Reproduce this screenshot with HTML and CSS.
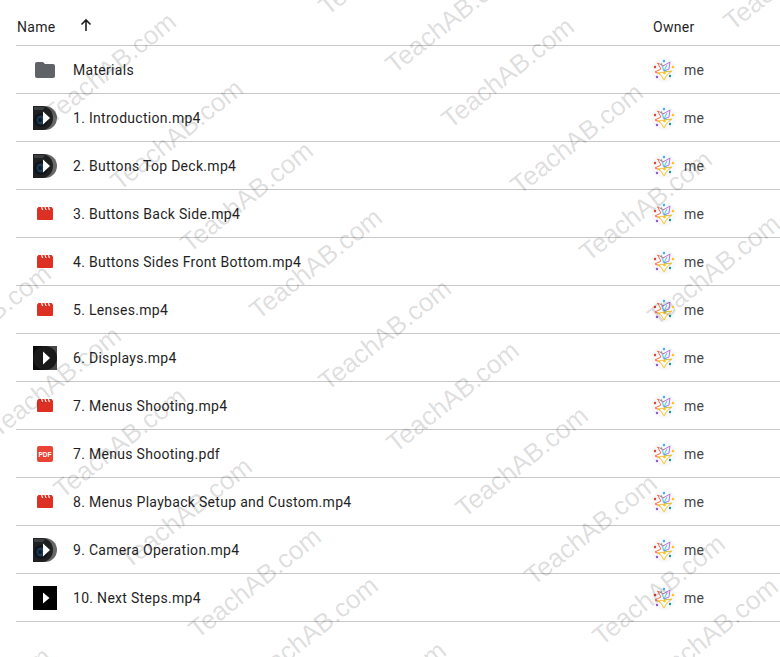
FILE: index.html
```html
<!DOCTYPE html>
<html lang="en">
<head>
  <meta charset="UTF-8" />
  <title>Materials</title>
  <link rel="stylesheet" href="styles.css">
</head>
<body>
  <svg class="defs" width="0" height="0">
    <symbol id="i-folder" viewBox="0 0 20 16">
      <path d="M2 0h6l2 2h8a2 2 0 0 1 2 2v10a2 2 0 0 1-2 2H2a2 2 0 0 1-2-2V2a2 2 0 0 1 2-2z" fill="#5f6368"/>
    </symbol>
    <symbol id="i-clip" viewBox="0 0 16 13">
      <path d="M0 1.500 1.500 0h13L16 1.500V12a1 1 0 0 1-1 1H1a1 1 0 0 1-1-1z" fill="#dd3025"/>
      <path d="M4 0l1 3h1.200L5.200 0zM7.400 0l1 3h1.200L8.600 0zM10.800 0l1 3H13L12 0z" fill="#fff"/>
    </symbol>
    <symbol id="i-pdf" viewBox="0 0 16 16">
      <rect width="16" height="16" rx="2" fill="#ea4335"/>
      <text x="8" y="10.500" text-anchor="middle" class="pdf-text">PDF</text>
    </symbol>
    <symbol id="i-cam" viewBox="0 0 24 24">
      <rect width="12" height="24" fill="#1e2022"/>
      <circle cx="12" cy="12" r="12" fill="#686868"/>
      <path d="M0 0h9a11 12 0 0 1 0 24H0z" fill="#1e2022"/>
      <path d="M1 1h11l-2 3H1z" fill="#3c3f42"/>
      <circle cx="8" cy="14" r="7" fill="#101418"/>
      <circle cx="8" cy="14" r="4.500" fill="#1c3a55"/>
      <circle cx="7" cy="14" r="2" fill="#0c1a28"/>
      <path d="M10 5.500v13l7-6.500z" fill="#fff"/>
    </symbol>
    <symbol id="i-dark" viewBox="0 0 24 24">
      <rect width="24" height="24" fill="#484848"/>
      <rect width="12" height="24" fill="#0a0a0a"/>
      <circle cx="12" cy="12" r="12" fill="#191919"/>
      <path d="M10 5.500v13l7-6.500z" fill="#fff"/>
    </symbol>
    <symbol id="i-black" viewBox="0 0 24 24">
      <rect width="24" height="24" fill="#000"/>
      <path d="M10 6.500v11l6.500-5.500z" fill="#fff"/>
    </symbol>
    <symbol id="i-me" viewBox="0 0 24 24">
      <circle cx="12" cy="12" r="12" fill="#f8f8fa"/>
      <g fill="none" stroke-width="0.900">
        <path d="M3 14l6-3-3.500-6L12 8M3 14l5 2" stroke="#f4623a"/>
        <path d="M11 8l7-4-1 7-5 2" stroke="#a868d0"/>
        <path d="M9 5l3 8 7 1M12 13l3-6" stroke="#35b5e8"/>
        <path d="M6 15l14-2-5 4-3 5-3-5z" stroke="#fbc21a"/>
      </g>
      <circle cx="12" cy="3" r="1.200" fill="#35b5e8"/>
      <circle cx="3" cy="9" r="1.200" fill="#e53935"/>
      <circle cx="21" cy="9" r="1.200" fill="#fbc21a"/>
      <circle cx="5" cy="19" r="1.200" fill="#9c4fd0"/>
      <circle cx="18" cy="18" r="1.200" fill="#14958a"/>
      <circle cx="12.500" cy="15" r="1.300" fill="#fbc21a"/>
    </symbol>
  </svg>

  <div class="list">
    <div class="head">
      <div class="name-col head-name">
        <span>Name</span>
        <svg class="sort" viewBox="0 0 16 16"><path d="M8 14V3M3.500 7.500 8 3l4.500 4.500" fill="none" stroke="#1f1f1f" stroke-width="1.600"/></svg>
      </div>
      <div class="owner-col">Owner</div>
    </div>

    <div class="row">
      <div class="name-col"><span class="icon"><svg class="ic-folder"><use href="#i-folder"/></svg></span>Materials</div>
      <div class="owner-col owner"><svg class="avatar"><use href="#i-me"/></svg>me</div>
    </div>
    <div class="row">
      <div class="name-col"><span class="icon"><svg class="ic-thumb"><use href="#i-cam"/></svg></span>1. Introduction.mp4</div>
      <div class="owner-col owner"><svg class="avatar"><use href="#i-me"/></svg>me</div>
    </div>
    <div class="row">
      <div class="name-col"><span class="icon"><svg class="ic-thumb"><use href="#i-cam"/></svg></span>2. Buttons Top Deck.mp4</div>
      <div class="owner-col owner"><svg class="avatar"><use href="#i-me"/></svg>me</div>
    </div>
    <div class="row">
      <div class="name-col"><span class="icon"><svg class="ic-clip"><use href="#i-clip"/></svg></span>3. Buttons Back Side.mp4</div>
      <div class="owner-col owner"><svg class="avatar"><use href="#i-me"/></svg>me</div>
    </div>
    <div class="row">
      <div class="name-col"><span class="icon"><svg class="ic-clip"><use href="#i-clip"/></svg></span>4. Buttons Sides Front Bottom.mp4</div>
      <div class="owner-col owner"><svg class="avatar"><use href="#i-me"/></svg>me</div>
    </div>
    <div class="row">
      <div class="name-col"><span class="icon"><svg class="ic-clip"><use href="#i-clip"/></svg></span>5. Lenses.mp4</div>
      <div class="owner-col owner"><svg class="avatar"><use href="#i-me"/></svg>me</div>
    </div>
    <div class="row">
      <div class="name-col"><span class="icon"><svg class="ic-thumb"><use href="#i-dark"/></svg></span>6. Displays.mp4</div>
      <div class="owner-col owner"><svg class="avatar"><use href="#i-me"/></svg>me</div>
    </div>
    <div class="row">
      <div class="name-col"><span class="icon"><svg class="ic-clip"><use href="#i-clip"/></svg></span>7. Menus Shooting.mp4</div>
      <div class="owner-col owner"><svg class="avatar"><use href="#i-me"/></svg>me</div>
    </div>
    <div class="row">
      <div class="name-col"><span class="icon"><svg class="ic-pdf"><use href="#i-pdf"/></svg></span>7. Menus Shooting.pdf</div>
      <div class="owner-col owner"><svg class="avatar"><use href="#i-me"/></svg>me</div>
    </div>
    <div class="row">
      <div class="name-col"><span class="icon"><svg class="ic-clip"><use href="#i-clip"/></svg></span>8. Menus Playback Setup and Custom.mp4</div>
      <div class="owner-col owner"><svg class="avatar"><use href="#i-me"/></svg>me</div>
    </div>
    <div class="row">
      <div class="name-col"><span class="icon"><svg class="ic-thumb"><use href="#i-cam"/></svg></span>9. Camera Operation.mp4</div>
      <div class="owner-col owner"><svg class="avatar"><use href="#i-me"/></svg>me</div>
    </div>
    <div class="row">
      <div class="name-col"><span class="icon"><svg class="ic-thumb"><use href="#i-black"/></svg></span>10. Next Steps.mp4</div>
      <div class="owner-col owner"><svg class="avatar"><use href="#i-me"/></svg>me</div>
    </div>
  </div>

  <div class="marks">
    <span class="mark m1">TeachAB.com</span>
    <span class="mark m2">TeachAB.com</span>
    <span class="mark m3">TeachAB.com</span>
    <span class="mark m4">TeachAB.com</span>
    <span class="mark m5">TeachAB.com</span>
    <span class="mark m6">TeachAB.com</span>
    <span class="mark m7">TeachAB.com</span>
    <span class="mark m8">TeachAB.com</span>
    <span class="mark m9">TeachAB.com</span>
    <span class="mark m10">TeachAB.com</span>
    <span class="mark m11">TeachAB.com</span>
    <span class="mark m12">TeachAB.com</span>
    <span class="mark m13">TeachAB.com</span>
    <span class="mark m14">TeachAB.com</span>
    <span class="mark m15">TeachAB.com</span>
    <span class="mark m16">TeachAB.com</span>
    <span class="mark m17">TeachAB.com</span>
    <span class="mark m18">TeachAB.com</span>
    <span class="mark m19">TeachAB.com</span>
    <span class="mark m20">TeachAB.com</span>
    <span class="mark m21">TeachAB.com</span>
    <span class="mark m22">TeachAB.com</span>
    <span class="mark m23">TeachAB.com</span>
    <span class="mark m24">TeachAB.com</span>
    <span class="mark m25">TeachAB.com</span>
  </div>
</body>
</html>
```

FILE: styles.css
```css
body {
  margin: 0;
  height: 657px;
  overflow: hidden;
  position: relative;
  background: #fff;
  color: #1f1f1f;
  font-family: Roboto, "Noto Sans", sans-serif;
  font-size: 14px;
  letter-spacing: 0.3px;
}

.defs {
  position: absolute;
}

.pdf-text {
  font-family: "Liberation Sans", sans-serif;
  font-size: 6.5px;
  font-weight: bold;
  letter-spacing: 0;
  fill: #fff;
}

.list {
  padding-left: 16px;
}

.head,
.row {
  display: flex;
  align-items: center;
  box-sizing: border-box;
  border-bottom: 1px solid #c7c7c7;
}

.head {
  height: 46px;
  padding-top: 8px;
}

.row {
  height: 48px;
}

.name-col {
  flex: 1;
  display: flex;
  align-items: center;
}

.head-name {
  padding-left: 1px;
}

.sort {
  width: 16px;
  height: 16px;
  margin-left: 22px;
  margin-top: -3px;
}

.owner-col {
  width: 127px;
}

.owner {
  display: flex;
  align-items: center;
  color: #444746;
}

.icon {
  width: 57px;
  flex: none;
  display: flex;
  justify-content: center;
}

.ic-folder {
  width: 20px;
  height: 16px;
}

.ic-thumb {
  width: 24px;
  height: 24px;
}

.ic-clip {
  width: 16px;
  height: 13px;
}

.ic-pdf {
  width: 16px;
  height: 16px;
}

.avatar {
  width: 24px;
  height: 24px;
  margin-left: -1px;
  margin-right: 8px;
}

.marks {
  position: absolute;
  inset: 0;
  overflow: hidden;
  pointer-events: none;
}

.mark {
  position: absolute;
  transform: translate(-50%, -50%) rotate(-38.5deg);
  font-family: "Liberation Sans", Arial, sans-serif;
  font-size: 26px;
  letter-spacing: 0;
  white-space: nowrap;
  color: rgba(0, 0, 0, 0.15);
}

.m1 { left: 110px; top: 68px; }
.m2 { left: 177px; top: 135px; }
.m3 { left: 247px; top: 197px; }
.m4 { left: 316px; top: 264px; }
.m5 { left: 385px; top: 335px; }
.m6 { left: 453px; top: 397px; }
.m7 { left: 522px; top: 462px; }
.m8 { left: 591px; top: 530px; }
.m9 { left: 659px; top: 590px; }
.m10 { left: 385px; top: -40px; }
.m11 { left: 452px; top: 18px; }
.m12 { left: 508px; top: 73px; }
.m13 { left: 577px; top: 139px; }
.m14 { left: 646px; top: 206px; }
.m15 { left: 714px; top: 270px; }
.m16 { left: -15px; top: 320px; }
.m17 { left: 55px; top: 382px; }
.m18 { left: 120px; top: 443px; }
.m19 { left: 186px; top: 513px; }
.m20 { left: 255px; top: 583px; }
.m21 { left: 312px; top: 632px; }
.m22 { left: 380px; top: 697px; }
.m23 { left: 712px; top: 633px; }
.m24 { left: 790px; top: -25px; }
.m25 { left: -15px; top: 703px; }
```
